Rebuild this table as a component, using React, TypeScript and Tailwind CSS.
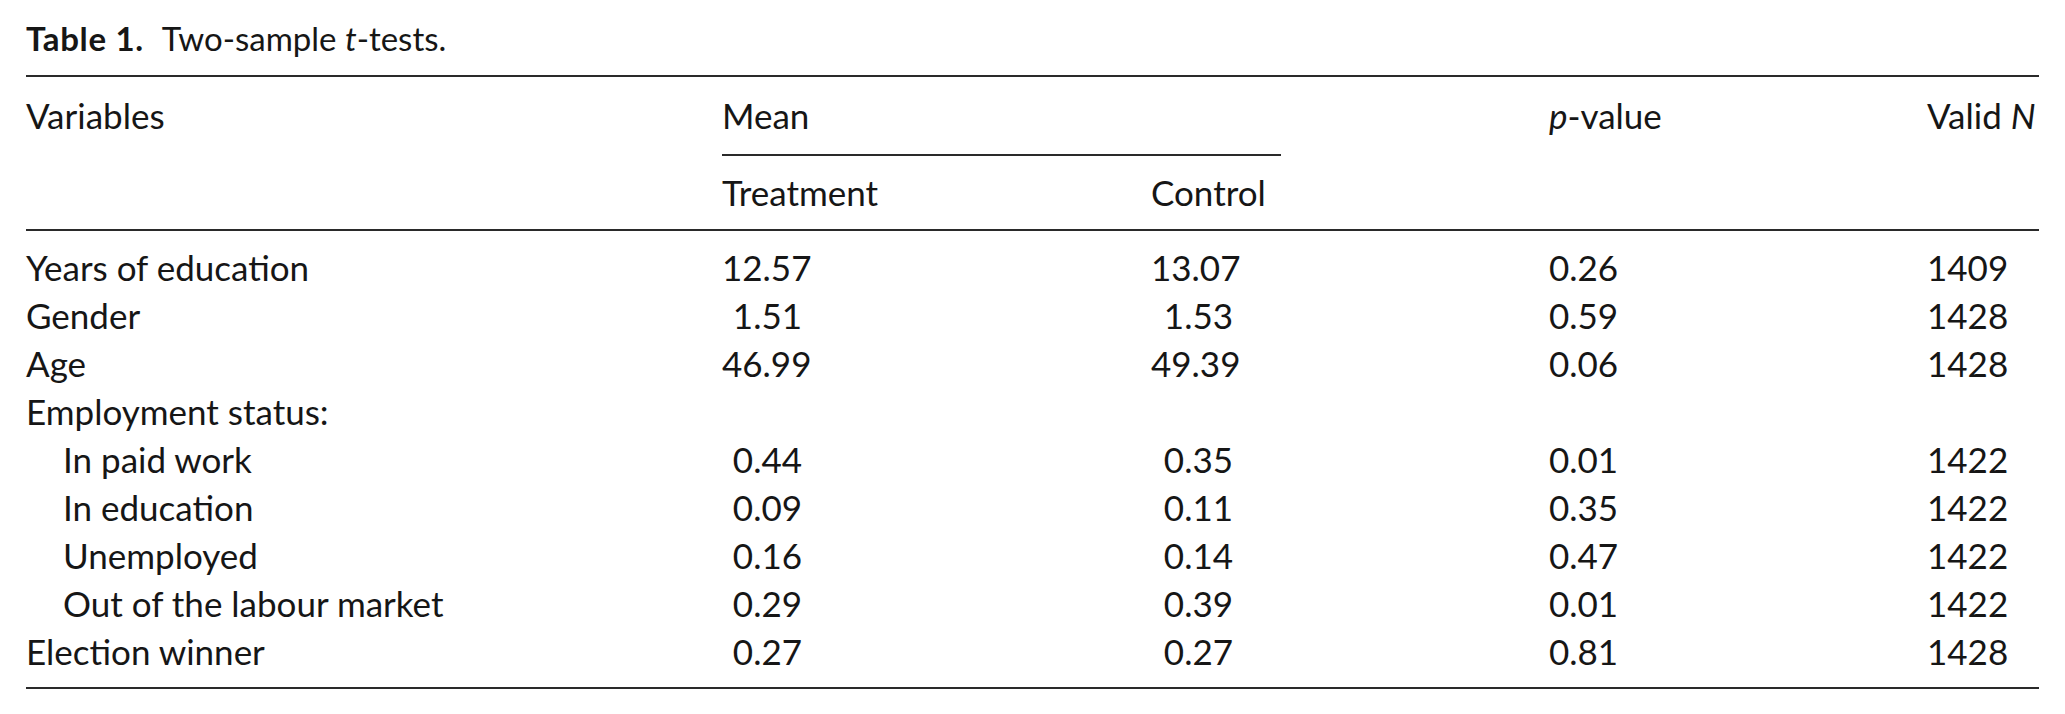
const rows: { label: string; indent?: boolean; t?: string; c?: string; p?: string; n?: string }[] = [
  { label: "Years of education", t: "12.57", c: "13.07", p: "0.26", n: "1409" },
  { label: "Gender", t: "1.51", c: "1.53", p: "0.59", n: "1428" },
  { label: "Age", t: "46.99", c: "49.39", p: "0.06", n: "1428" },
  { label: "Employment status:" },
  { label: "In paid work", indent: true, t: "0.44", c: "0.35", p: "0.01", n: "1422" },
  { label: "In education", indent: true, t: "0.09", c: "0.11", p: "0.35", n: "1422" },
  { label: "Unemployed", indent: true, t: "0.16", c: "0.14", p: "0.47", n: "1422" },
  { label: "Out of the labour market", indent: true, t: "0.29", c: "0.39", p: "0.01", n: "1422" },
  { label: "Election winner", t: "0.27", c: "0.27", p: "0.81", n: "1428" },
];

export default function App() {
  return (
    <div className="min-h-[714px] bg-white pl-[26px] pt-[18px] font-[Lato,sans-serif] text-[#161616]">
      <h2 className="text-[33px] leading-[40px]">
        <span className="font-bold tracking-[0.02em]">Table 1.</span>
        <span className="ml-[18px]">Two-sample <i>t</i>-tests.</span>
      </h2>

      <table className="mt-[17px] w-[2013px] table-fixed border-collapse border-y-2 border-[#2a2a2a] text-[35px] leading-[48px]">
        <colgroup>
          <col className="w-[696px]" />
          <col className="w-[429px]" />
          <col className="w-[130px]" />
          <col className="w-[268px]" />
          <col className="w-[378px]" />
          <col className="w-[112px]" />
        </colgroup>
        <thead>
          <tr>
            <th rowSpan={2} className="border-b-2 border-[#2a2a2a] p-0 pt-[14px] pb-[14px] text-left align-top font-normal">Variables</th>
            <th colSpan={2} className="border-b-2 border-[#2a2a2a] p-0 pt-[14px] pb-[15px] text-left align-top font-normal">Mean</th>
            <th rowSpan={2} className="border-b-2 border-[#2a2a2a] p-0" />
            <th rowSpan={2} className="border-b-2 border-[#2a2a2a] p-0 pt-[14px] text-left align-top font-normal"><i>p</i>-value</th>
            <th rowSpan={2} className="border-b-2 border-[#2a2a2a] p-0 pt-[14px] text-left align-top font-normal">Valid <i>N</i></th>
          </tr>
          <tr>
            <th className="border-b-2 border-[#2a2a2a] p-0 pt-[12px] pb-[13px] text-left font-normal">Treatment</th>
            <th className="border-b-2 border-[#2a2a2a] p-0 pt-[12px] pb-[13px] text-left font-normal">Control</th>
          </tr>
        </thead>
        <tbody>
          {rows.map((r, i) => {
            const pad = `p-0 ${i === 0 ? "pt-[12px]" : ""} ${i === rows.length - 1 ? "pb-[12px]" : ""}`;
            return (
              <tr key={r.label}>
                <td className={`${pad} ${r.indent ? "pl-[37px]" : ""}`}>{r.label}</td>
                <td className={pad}><span className="inline-block w-[80px] text-right">{r.t}</span></td>
                <td className={pad}><span className="inline-block w-[82px] text-right">{r.c}</span></td>
                <td className={pad} />
                <td className={pad}>{r.p}</td>
                <td className={pad}>{r.n}</td>
              </tr>
            );
          })}
        </tbody>
      </table>
    </div>
  );
}
